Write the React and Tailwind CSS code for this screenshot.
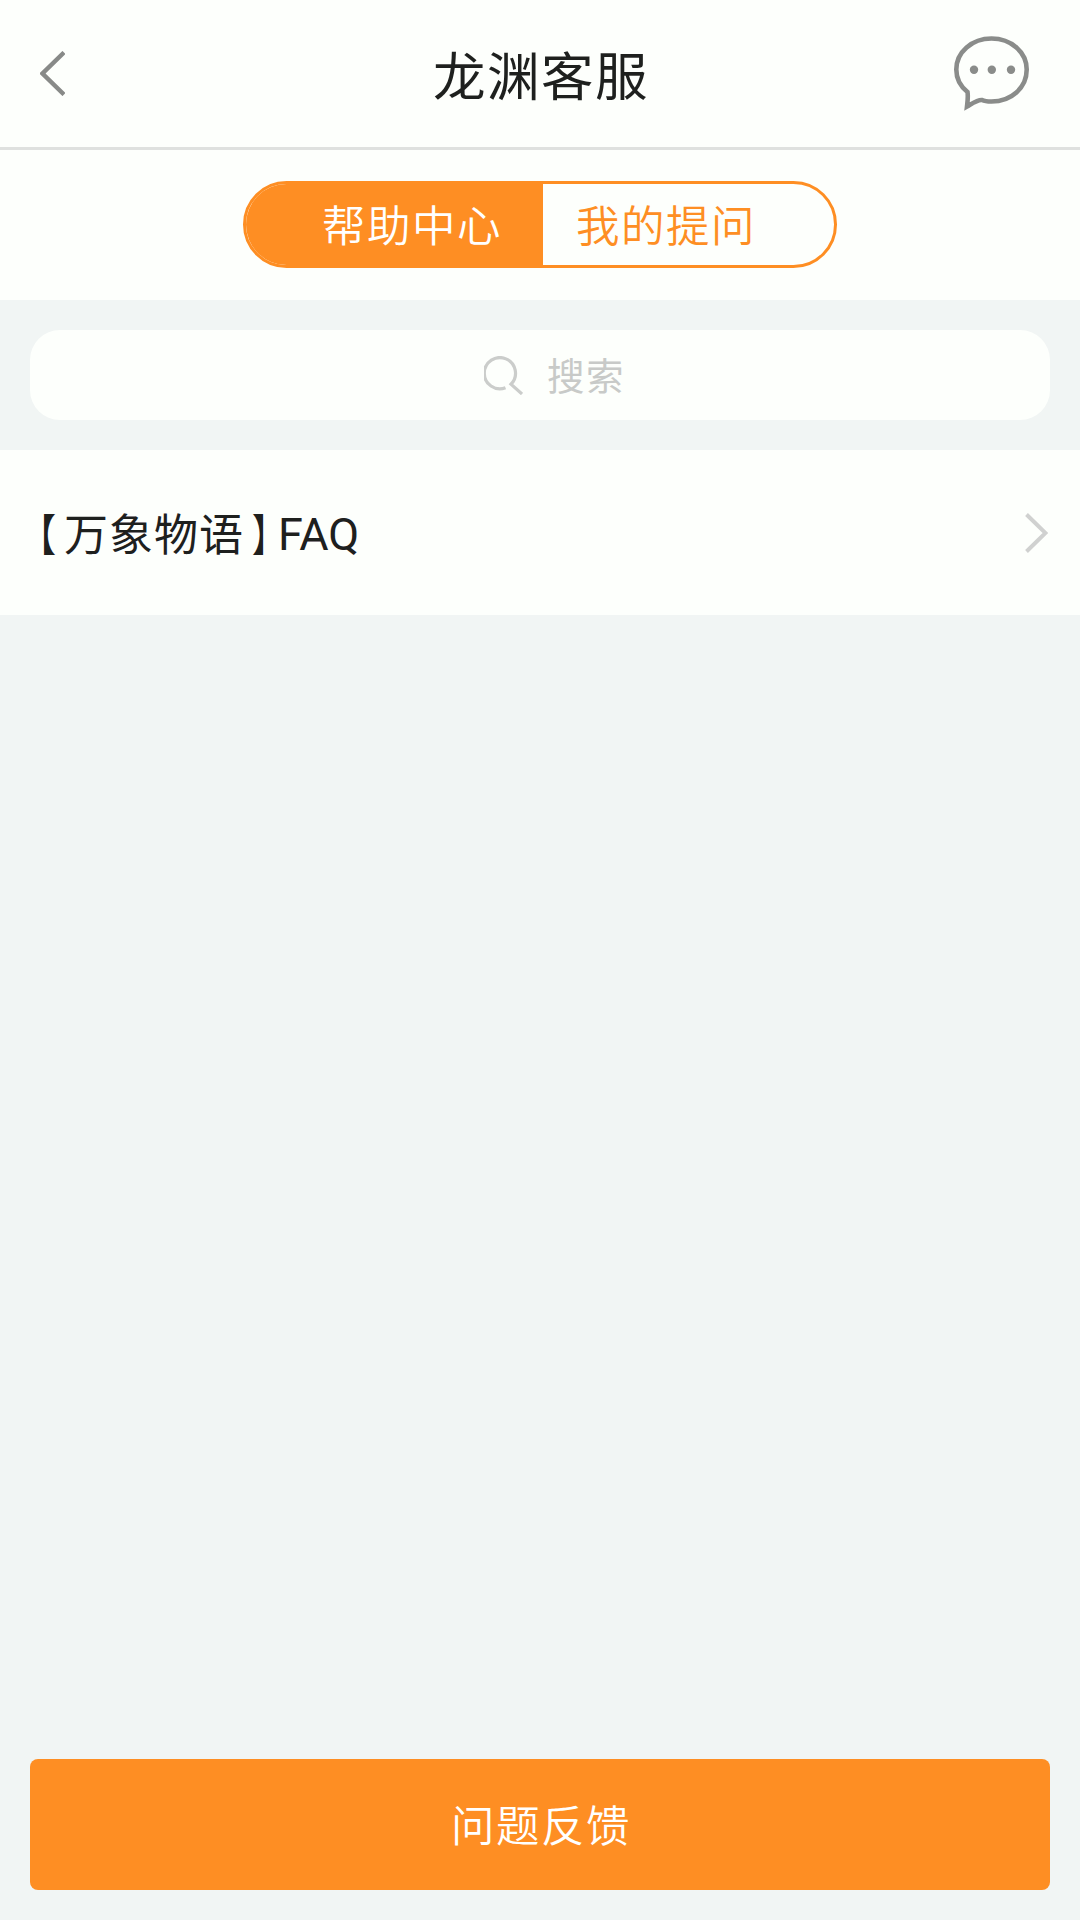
import React, { useState } from 'react'

const faqs = [{ id: 1, game: '万象物语', suffix: 'FAQ' }]

function Header() {
  return (
    <header className="flex h-[150px] items-center justify-between border-b-[3px] border-[#dfe1df] pr-[51px] pl-10">
      <button className="w-[75px]" aria-label="back">
        <svg width="25" height="45" viewBox="0 0 25 45" fill="none">
          <path d="M24 1.5L2.5 22.5L24 43.5" stroke="#888a88" strokeWidth="4.4" />
        </svg>
      </button>
      <h1 className="pt-[10px] pl-[13px] text-[52.5px] leading-none tracking-[1.5px]">龙渊客服</h1>
      <button className="w-[75px]" aria-label="chat">
        <svg width="75" height="75" viewBox="0 0 75 75" fill="none">
          <path
            d="M13.5 56C6 50 2.3 42 2.3 33.5C2.3 16 18 2.5 37.5 2.5C57 2.5 72.7 16 72.7 33.5C72.7 52 57 65.5 37.5 65.5C33.5 65.5 30 65 28 64C24 63.5 19 67 13 70.5C13.5 66 14.3 61 13.5 56Z"
            stroke="#8a8c8a"
            strokeWidth="4.6"
          />
          <circle cx="20" cy="33.7" r="4.2" fill="#8a8c8a" />
          <circle cx="37.8" cy="33.7" r="4.2" fill="#8a8c8a" />
          <circle cx="57" cy="33.7" r="4.2" fill="#8a8c8a" />
        </svg>
      </button>
    </header>
  )
}

function Tabs({ tab, onChange }) {
  const active = 'bg-[#fe8e23] text-white'
  const normal = 'text-[#fe8e23]'
  return (
    <div className="flex h-[150px] justify-center pt-[31px]">
      <div className="flex h-[87px] w-[594px] overflow-hidden rounded-full border-[3px] border-[#fe8e23] text-[43.5px] leading-none font-[350] tracking-[1.5px]">
        <button
          onClick={() => onChange('help')}
          className={`flex w-[297px] items-center pt-[6px] pl-[76px] ${tab === 'help' ? active : normal}`}
        >
          帮助中心
        </button>
        <button
          onClick={() => onChange('mine')}
          className={`flex flex-1 items-center pt-[6px] pl-[33px] ${tab === 'mine' ? active : normal}`}
        >
          我的提问
        </button>
      </div>
    </div>
  )
}

function SearchBar() {
  return (
    <div className="h-[150px] bg-[#f1f5f4] p-[30px]">
      <div className="flex h-full items-center justify-center gap-[24px] rounded-[30px] bg-[#fdfffc] pl-[29px] text-[37.5px] leading-none tracking-[1.5px] text-[#c8cac8]">
        <svg width="39" height="39" viewBox="0 0 39 39" fill="none">
          <path
            d="M21.5 31.8A15.6 15.6 0 1 1 27 28.2L38 38"
            stroke="#cbcdcb"
            strokeWidth="3.2"
          />
        </svg>
        <span className="pt-[5px]">搜索</span>
      </div>
    </div>
  )
}

function FaqItem({ item }) {
  return (
    <div className="flex h-[165px] items-center justify-between bg-[#fdfffc] pr-8 pl-[38px]">
      <div className="flex pt-[6px] text-[44px] leading-none">
        <span className="w-[26px] origin-left scale-x-[0.82] [font-feature-settings:'halt']">【</span>
        <span className="w-[188px] tracking-[1px]">{item.game}</span>
        <span className="w-[26px] origin-left scale-x-[0.75] [font-feature-settings:'halt']">】</span>
        <span className="-mt-[2px] text-[45px]">{item.suffix}</span>
      </div>
      <svg width="23" height="40" viewBox="0 0 23 40" fill="none">
        <path d="M1.5 1.5L20.5 20L1.5 38.5" stroke="#d0d1d0" strokeWidth="4" />
      </svg>
    </div>
  )
}

export default function App() {
  const [tab, setTab] = useState('help')

  return (
    <div className="flex h-[1920px] w-[1080px] flex-col bg-[#f1f5f4] font-[Roboto,'Noto_Sans_CJK_SC',sans-serif] text-[#1e201e]">
      <div className="bg-[#fdfffc]">
        <Header />
        <Tabs tab={tab} onChange={setTab} />
      </div>
      <SearchBar />
      <main className="flex-1">
        {faqs.map(item => (
          <FaqItem key={item.id} item={item} />
        ))}
      </main>
      <footer className="px-[30px] pb-[30px]">
        <button className="h-[131px] w-full rounded-lg bg-[#fe8e23] pt-[6px] pl-[2px] text-[43.5px] leading-none font-[350] tracking-[1.5px] text-white">
          问题反馈
        </button>
      </footer>
    </div>
  )
}
